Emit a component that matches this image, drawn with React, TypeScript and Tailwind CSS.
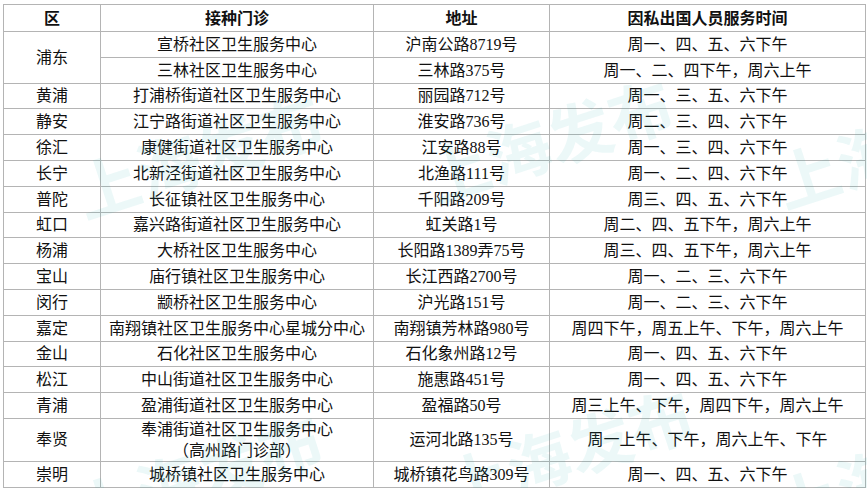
import React from "react";

type Row = {
  district?: string;
  span?: number;
  clinic: string[];
  address: string;
  time: string;
  h?: string;
};

const rows: Row[] = [
  { district: "浦东", span: 2, clinic: ["宣桥社区卫生服务中心"], address: "沪南公路8719号", time: "周一、四、五、六下午" },
  { clinic: ["三林社区卫生服务中心"], address: "三林路375号", time: "周一、二、四下午，周六上午" },
  { district: "黄浦", clinic: ["打浦桥街道社区卫生服务中心"], address: "丽园路712号", time: "周一、三、五、六下午" },
  { district: "静安", clinic: ["江宁路街道社区卫生服务中心"], address: "淮安路736号", time: "周二、三、四、六下午" },
  { district: "徐汇", clinic: ["康健街道社区卫生服务中心"], address: "江安路88号", time: "周一、三、四、六下午" },
  { district: "长宁", clinic: ["北新泾街道社区卫生服务中心"], address: "北渔路111号", time: "周一、二、四、六下午" },
  { district: "普陀", clinic: ["长征镇社区卫生服务中心"], address: "千阳路209号", time: "周三、四、五、六下午" },
  { district: "虹口", clinic: ["嘉兴路街道社区卫生服务中心"], address: "虹关路1号", time: "周二、四、五下午，周六上午" },
  { district: "杨浦", clinic: ["大桥社区卫生服务中心"], address: "长阳路1389弄75号", time: "周三、四、五下午，周六上午" },
  { district: "宝山", clinic: ["庙行镇社区卫生服务中心"], address: "长江西路2700号", time: "周一、二、三、六下午" },
  { district: "闵行", clinic: ["颛桥社区卫生服务中心"], address: "沪光路151号", time: "周一、二、三、六下午" },
  { district: "嘉定", clinic: ["南翔镇社区卫生服务中心星城分中心"], address: "南翔镇芳林路980号", time: "周四下午，周五上午、下午，周六上午" },
  { district: "金山", clinic: ["石化社区卫生服务中心"], address: "石化象州路12号", time: "周一、四、五、六下午" },
  { district: "松江", clinic: ["中山街道社区卫生服务中心"], address: "施惠路451号", time: "周一、四、五、六下午" },
  { district: "青浦", clinic: ["盈浦街道社区卫生服务中心"], address: "盈福路50号", time: "周三上午、下午，周四下午，周六上午" },
  { district: "奉贤", clinic: ["奉浦街道社区卫生服务中心", "（高州路门诊部）"], address: "运河北路135号", time: "周一上午、下午，周六上午、下午", h: "h-[43px]" },
  { district: "崇明", clinic: ["城桥镇社区卫生服务中心"], address: "城桥镇花鸟路309号", time: "周一、四、五、六下午" },
];

const cell = "border border-[#b4b4b4] text-center align-middle p-0 leading-[21px]";

const marks = [
  { x: 70, y: 105 },
  { x: 420, y: 90 },
  { x: 770, y: 95 },
  { x: 70, y: 425 },
  { x: 440, y: 400 },
  { x: 770, y: 420 },
];

export default function App() {
  return (
    <div
      className="relative w-[867px] h-[488px] overflow-hidden bg-white pt-[4px] pl-[3px] text-[16px] text-[#111]"
      style={{ fontFamily: '"Liberation Serif", "Noto Sans CJK SC", serif' }}
    >
      <table className="table-fixed border-collapse w-[862px]">
        <colgroup>
          <col className="w-[97px]" />
          <col className="w-[273px]" />
          <col className="w-[176px]" />
          <col className="w-[316px]" />
        </colgroup>
        <thead>
          <tr className="h-[27px] font-bold">
            <th className={cell}>区</th>
            <th className={cell}>接种门诊</th>
            <th className={cell}>地址</th>
            <th className={cell}>因私出国人员服务时间</th>
          </tr>
        </thead>
        <tbody>
          {rows.map((r, i) => (
            <tr key={i} className={r.h ?? "h-[25.8px]"}>
              {r.district && (
                <td className={cell} rowSpan={r.span ?? 1}>
                  {r.district}
                </td>
              )}
              <td className={cell}>
                {r.clinic.map((c) => (
                  <div key={c}>{c}</div>
                ))}
              </td>
              <td className={cell}>{r.address}</td>
              <td className={cell}>{r.time}</td>
            </tr>
          ))}
        </tbody>
      </table>
      {/* watermark */}
      {marks.map((m, i) => (
        <span
          key={i}
          className="pointer-events-none absolute whitespace-nowrap text-[64px] font-bold text-[#2bb5b5]/[0.09] -rotate-[18deg]"
          style={{ left: m.x, top: m.y, fontFamily: '"Noto Sans CJK SC", sans-serif' }}
        >
          上海发布
        </span>
      ))}
    </div>
  );
}
